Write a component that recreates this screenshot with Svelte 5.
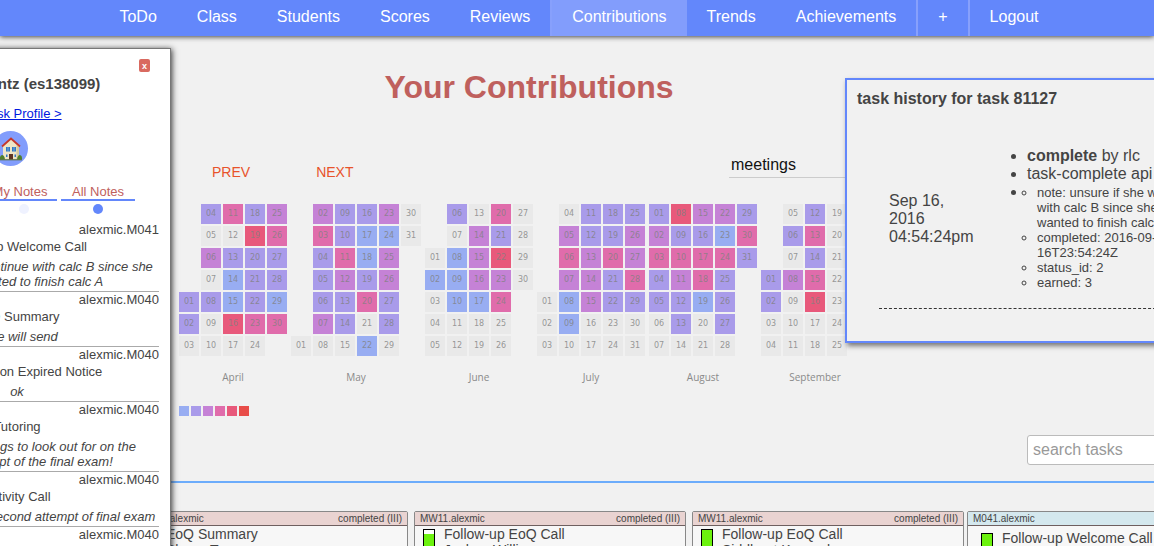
<script>
  const links = ['ToDo', 'Class', 'Students', 'Scores', 'Reviews', 'Contributions', 'Trends', 'Achievements', '+', 'Logout'];
  const divided = ['Contributions', '+', 'Logout'];

  // first: weekday of the 1st (0 = Monday); levels: one activity digit per day, 0 = none.
  const months = [
    { name: 'April', first: 4, columns: 5, levels: '220203020040211502522240342214' },
    { name: 'May', first: 6, columns: 6, levels: '0342223022432202112401313322000' },
    { name: 'June', first: 2, columns: 5, levels: '010002011100033310042534000000' },
    { name: 'July', first: 4, columns: 5, levels: '0000343110223330022422002334200' },
    { name: 'August', first: 0, columns: 5, levels: '2342200524322032441003142220242' },
    { name: 'September', first: 3, columns: 5, levels: '220002030002424500000000000000' }
  ];

  const calendar = months.map((month) => ({
    ...month,
    days: [...month.levels].map((level, i) => ({
      level,
      label: String(i + 1).padStart(2, '0'),
      row: ((month.first + i) % 7) + 1,
      column: Math.floor((month.first + i) / 7) + 1
    }))
  }));

  const notes = [
    { by: 'alexmic.M041', task: 'Follow-up Welcome Call', text: 'but she wants to continue with calc B since she\nalways wanted to finish calc A' },
    { by: 'alexmic.M040', task: 'EoQ Summary', text: 'Jane will send' },
    { by: 'alexmic.M040', task: 'Class Session Expired Notice', text: 'ok' },
    { by: 'alexmic.M040', task: 'Tutoring', text: 'sent us some things to look out for on the\nsecond attempt of the final exam!' },
    { by: 'alexmic.M040', task: 'Activity Call', text: 'is getting ready for second attempt of final exam' },
    { by: 'alexmic.M040', task: 'Tutoring', text: '' }
  ];

  const completed = [
    { code: 'M040.alexmic', task: 'EoQ Summary', who: 'Shane Turner', fill: 80 },
    { code: 'MW11.alexmic', task: 'Follow-up EoQ Call', who: 'Joshua Williams', fill: 80 },
    { code: 'MW11.alexmic', task: 'Follow-up EoQ Call', who: 'Siddhant Karmarkar', fill: 100 }
  ];
</script>

<div class="page">
  <nav>
    {#each links as link}
      <a href="#top" class:divided={divided.includes(link)} class:active={link === 'Contributions'}>{link}</a>
    {/each}
  </nav>

  <main>
    <section class="contributions">
      <h1>Your Contributions</h1>
      <div class="controls">
        <div class="steps">
          <button>PREV</button>
          <button>NEXT</button>
        </div>
        <select aria-label="Contribution type"><option>meetings</option></select>
      </div>
      <div class="calendar">
        {#each calendar as month}
          <div class="month" style:--columns={month.columns}>
            <div class="days">
              {#each month.days as day}
                <span class="day l{day.level}" style:grid-area="{day.row} / {day.column}">{day.label}</span>
              {/each}
            </div>
            <p>{month.name}</p>
          </div>
        {/each}
      </div>
      <div class="legend">
        {#each [1, 2, 3, 4, 5, 6] as n}<i class="l{n}"></i>{/each}
      </div>
    </section>

    <div class="search"><input type="text" placeholder="search tasks" aria-label="search tasks" /></div>

    <section class="tasks">
      <div class="group">
        {#each completed as card}
          <article class="card">
            <header><span>{card.code}</span><span>completed (III)</span></header>
            <div class="body">
              <div class="meter"><i style:height="{card.fill}%"></i></div>
              <div class="lines"><p>{card.task}</p><p>{card.who}</p></div>
            </div>
          </article>
        {/each}
      </div>
      <div class="group">
        <article class="card open">
          <header><span>M041.alexmic</span></header>
          <div class="body">
            <div class="meter"><i style:height="100%"></i></div>
            <div class="lines"><p>Follow-up Welcome Call</p></div>
          </div>
        </article>
      </div>
    </section>
  </main>

  <aside class="student">
    <button class="close" aria-label="Close">x</button>
    <h2>Erica Frantz (es138099)</h2>
    <a class="profile" href="#profile">ZDesk Profile &gt;</a>
    <div class="home">
      <svg viewBox="0 0 24 24" width="24" height="24" aria-hidden="true">
        <path d="M4 8.500 L12 1 L20 8.500 V22.500 H4Z" fill="#eee5c5" />
        <path d="M17.500 8 L20 9.500 V22.500 H17.500Z" fill="#d5c99f" />
        <path d="M3 9.500 L12 1.500 L21 9.500" fill="none" stroke="#c4372c" stroke-width="1.800" />
        <path d="M1 22.500 Q0.500 18.500 3 18 Q5.500 18 6 22.500Z M18 22.500 Q18.500 18 21 18 Q23.500 18.500 23 22.500Z" fill="#4f7f2c" />
        <path d="M7 10 H11 V14.500 H7Z M13 10 H17 V14.500 H13Z" fill="#2f78c4" />
        <path d="M9 10 V14.500 M15 10 V14.500" stroke="#a9cbe8" stroke-width="0.600" />
        <path d="M7 17.500 H8.500 V20 H7Z M15.500 17.500 H17 V20 H15.500Z" fill="#2f78c4" />
        <path d="M10 17 H14 V22.500 H10Z" fill="#5d3423" />
        <path d="M1 22.800 H23" stroke="#53682f" stroke-width="1" />
      </svg>
    </div>
    <div class="tabs">
      <label for="mine">My Notes</label>
      <label for="all">All Notes</label>
    </div>
    <div class="dots">
      <input type="radio" name="notes" id="mine" />
      <input type="radio" name="notes" id="all" checked />
    </div>
    <ul>
      {#each notes as note}
        <li>
          <p class="by">{note.by}</p>
          <p class="task">{note.task}</p>
          <p class="text">{note.text}</p>
        </li>
      {/each}
    </ul>
  </aside>

  <aside class="history">
    <h3>task history for task 81127</h3>
    <div class="entry">
      <time>Sep 16, 2016 04:54:24pm</time>
      <ul>
        <li><b>complete</b> by rlc</li>
        <li>task-complete api</li>
        <li>
          <ul>
            <li>note: unsure if she wants<br />with calc B since she only<br />wanted to finish calc A</li>
            <li>completed: 2016-09-<br />16T23:54:24Z</li>
            <li>status_id: 2</li>
            <li>earned: 3</li>
          </ul>
        </li>
      </ul>
    </div>
  </aside>
</div>

<style>
  :global(body) {
    background: #f1f1f1;
    color: #444;
    font-family: "Liberation Sans", Arial, sans-serif;
  }
  .page {
    position: relative;
    height: 100vh;
    overflow: hidden;
  }
  h1, h2, h3, p, ul { margin: 0; padding: 0; }
  button { border: 0; background: none; font-family: inherit; cursor: pointer; }

  nav {
    display: flex;
    justify-content: center;
    padding-left: 4px;
    background: #6387fb;
    box-shadow: 0 1px 5px #444;
  }
  nav a {
    padding: 0 20px 2px;
    color: #fff;
    font-size: 16px;
    line-height: 34px;
    text-decoration: none;
    white-space: nowrap;
  }
  nav a.divided { border-left: 2px solid #87a0fc; }
  nav a.active { background: #829dfc; }

  .contributions {
    max-width: 700px;
    margin-left: 179px;
  }
  h1 {
    padding-top: 32px;
    color: #bf605d;
    font-size: 32px;
    line-height: 38px;
    text-align: center;
  }
  .controls {
    display: flex;
    justify-content: space-between;
    align-items: flex-start;
    padding-top: 46px;
  }
  .steps {
    display: flex;
    gap: 66px;
    padding: 10px 33px;
  }
  .steps button {
    padding: 0;
    color: #e8532b;
    font-size: 14px;
    line-height: 20px;
  }
  select {
    appearance: none;
    width: 150px;
    height: 26px;
    padding: 0 2px;
    border: 0;
    border-bottom: 1px solid #ccc;
    background: none;
    color: #111;
    font: 16px "Liberation Sans", Arial, sans-serif;
  }
  .calendar {
    display: flex;
    gap: 4px;
    padding-top: 12px;
  }
  .month { color: #8a8a8a; font-family: "Open Sans", sans-serif; }
  .days {
    display: grid;
    grid-template: repeat(7, 20px) / repeat(var(--columns), 20px);
    gap: 2px;
  }
  .day {
    color: rgb(128 128 128 / 0.8);
    font-family: "DejaVu Sans", sans-serif;
    font-size: 8px;
    line-height: 20px;
    text-align: center;
  }
  .month p {
    padding-top: 14px;
    font-size: 10px;
    line-height: 14px;
    text-align: center;
  }
  .l0 { background: #e9e9e9; }
  .l1 { background: #98adf2; }
  .l2 { background: #a99bea; }
  .l3 { background: #c582d6; }
  .l4 { background: #e06cab; }
  .l5 { background: #e8597b; }
  .l6 { background: #e84d49; }
  .legend {
    display: flex;
    gap: 2px;
    padding-top: 22px;
  }
  .legend i { width: 10px; height: 10px; }

  .search {
    display: flex;
    justify-content: flex-end;
    margin-right: -24px;
    padding: 19px 0 16px;
  }
  .search input {
    box-sizing: border-box;
    width: 151px;
    height: 30px;
    padding: 0 5px;
    border: 1px solid #bbb;
    border-radius: 3px;
    background: #fff;
    font: 16px "Liberation Sans", Arial, sans-serif;
  }
  .search input::placeholder { color: #999; }

  .tasks {
    display: flex;
    gap: 3px;
    padding: 28px 0 0 136px;
    border-top: 2px solid #6cacfb;
  }
  .group { display: flex; gap: 6px; }
  .card {
    box-sizing: border-box;
    flex: none;
    width: 272px;
    height: 100px;
    border: 1px solid #888;
    border-radius: 2px;
    background: #f7f7f7;
  }
  .card header {
    display: flex;
    justify-content: space-between;
    padding: 1px 5px 0;
    border-bottom: 1px solid #6e5f5f;
    background: #e9d3d1;
    font-size: 10px;
    line-height: 12px;
  }
  .card.open header { background: #d4e8ee; }
  .body { display: flex; gap: 9px; padding: 0 8px; }
  .open .body { padding: 4px 13px 0; }
  .meter {
    display: flex;
    align-items: flex-end;
    width: 10px;
    height: 20px;
    margin-top: 3px;
    border: 1px solid #000;
    background: #fff;
  }
  .meter i { width: 100%; background: #6cf20e; }
  .lines { font-size: 14px; line-height: 16px; }

  .student {
    position: absolute;
    top: 48px;
    left: -137px;
    box-sizing: border-box;
    width: 308px;
    height: 540px;
    padding: 0 11px;
    border: 1px solid #777;
    background: #fff;
    box-shadow: 1px 1px 6px #333;
    font-size: 13px;
    line-height: 15px;
    text-align: center;
  }
  .close {
    display: block;
    margin: 10px 9px 0 auto;
    width: 11px;
    height: 13px;
    padding: 0;
    border-radius: 2px;
    background: #d96a60;
    color: #fff;
    font-size: 9px;
    font-weight: bold;
    line-height: 12px;
  }
  h2 { padding: 2px 0 12px; font-size: 15px; line-height: 20px; }
  .profile { display: block; color: #0018e0; line-height: 16px; }
  .home {
    display: flex;
    align-items: center;
    justify-content: center;
    width: 35px;
    height: 35px;
    margin: 9px 0 0 118px;
    border-radius: 50%;
    background: #829dfc;
  }
  .tabs {
    display: flex;
    justify-content: flex-end;
    gap: 4px;
    padding: 18px 24px 0 0;
    color: #c0605d;
  }
  .tabs label {
    width: 74px;
    border-bottom: 2px solid #6387fb;
  }
  .dots {
    display: flex;
    justify-content: flex-end;
    gap: 64px;
    padding: 3px 56px 8px 0;
  }
  .dots input {
    appearance: none;
    width: 10px;
    height: 10px;
    margin: 0;
    border-radius: 50%;
    background: #eff2ff;
  }
  .dots input:checked { background: #6387fb; }
  .student ul { list-style: none; }
  .student li { border-bottom: 1px solid #aaa; }
  .by { text-align: right; }
  .task { padding: 2px 0 5px; }
  .text { padding-bottom: 2px; font-style: italic; white-space: pre-line; }

  .history {
    position: absolute;
    top: 78px;
    left: 845px;
    box-sizing: border-box;
    width: 360px;
    height: 265px;
    padding: 0 32px;
    border: 2px solid #6387fb;
    background: #f1f1f1;
    box-shadow: 2px 3px 5px #777;
    font-size: 16px;
    line-height: 18px;
  }
  h3 { margin: 10px 0 39px -22px; font-size: 16px; line-height: 18px; }
  .entry {
    display: flex;
    align-items: center;
    gap: 36px;
    padding: 0 0 18px 10px;
    border-bottom: 1px dashed #333;
  }
  time { flex: none; width: 88px; }
  .history ul { list-style: disc; }
  .entry > ul { padding-left: 14px; white-space: nowrap; }
  .history ul ul { padding-left: 10px; list-style: circle; font-size: 13px; line-height: 15px; }
</style>
